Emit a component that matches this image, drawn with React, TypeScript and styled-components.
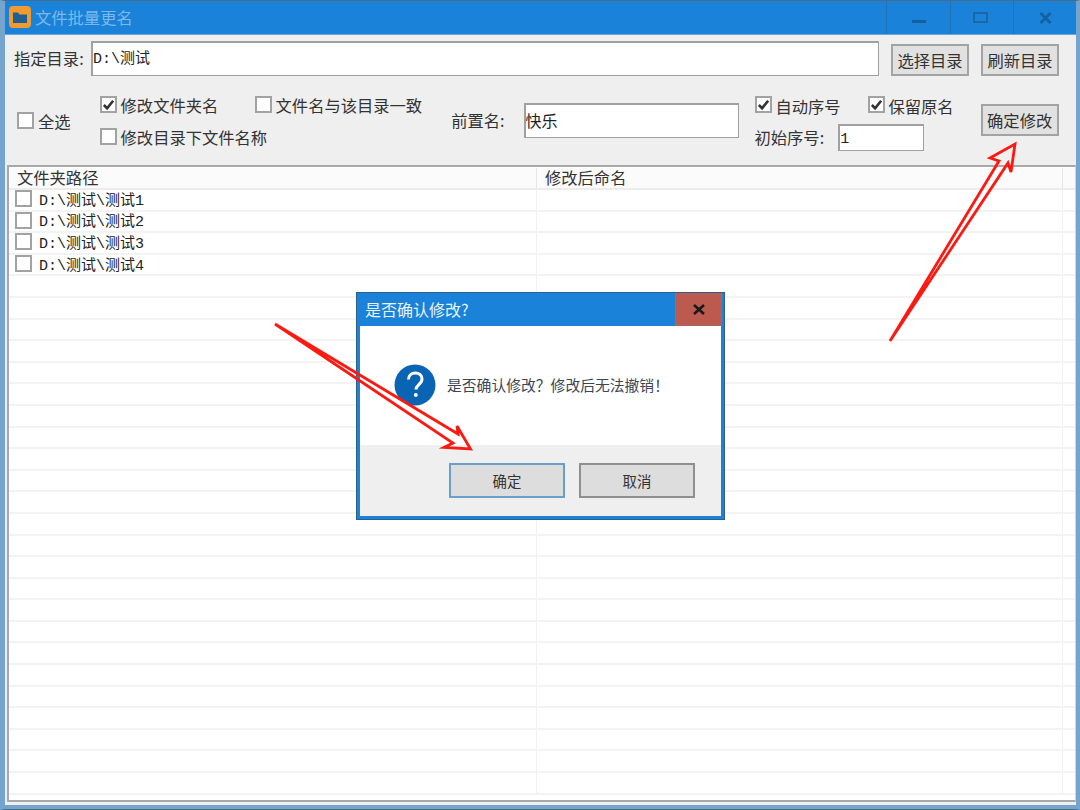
// App.tsx
import styled, { createGlobalStyle } from "styled-components";

const GlobalStyle = createGlobalStyle`
    * {
        box-sizing: border-box;
    }
    html, body {
        margin: 0;
        padding: 0;
        background: #efefef;
    }
    body {
        font-family: "Noto Sans CJK SC", "Liberation Sans", sans-serif;
    }
`;

const Frame = styled.div`
    position: relative;
    width: 1080px;
    height: 810px;
    overflow: hidden;
    display: flex;
    flex-direction: column;
    background: #efefef;
    border-top: 1px solid #4a6a85;
    border-bottom: 1px solid #4a6a85;
    border-left: 5px solid #75a4cf;
    border-right: 4px solid #75a4cf;
    box-shadow: inset 0 -4px 0 #75a4cf;
    padding-bottom: 7px;
`;

const TitleBar = styled.div`
    display: flex;
    align-items: stretch;
    flex: none;
    height: 34px;
    margin: 0 -4px 0 -5px;
    padding-left: 9px;
    background: #1a82d8;
    border-bottom: 1px solid #6aa6da;
`;

const AppIcon = styled.svg`
    width: 22px;
    height: 22px;
    margin-top: 5px;
`;

const AppTitle = styled.div`
    flex: 1;
    margin-left: 4px;
    font-size: 16.3px;
    line-height: 33px;
    color: #7db8ea;
`;

const WinButton = styled.div<{ $w: number; $shift?: number }>`
    width: ${(p) => p.$w}px;
    display: flex;
    align-items: center;
    justify-content: center;
    border-left: 1px solid #2072b8;
    padding-right: ${(p) => p.$shift ?? 0}px;
    svg {
        display: block;
    }
`;

const DirRow = styled.div`
    display: flex;
    flex: none;
    align-items: flex-end;
    height: 41px;
    padding-left: 9px;
`;

const DirLabel = styled.span`
    align-self: center;
    margin-top: 4px;
    width: 77px;
    font-size: 16.3px;
    line-height: 22px;
    color: #333;
    white-space: nowrap;
`;

const Label = styled.span`
    font-size: 16.3px;
    line-height: 22px;
    color: #333;
    white-space: nowrap;
`;

const CheckText = styled(Label)`
    padding-top: 2px;
`;

const TextBox = styled.div<{ $w: number; $h: number }>`
    width: ${(p) => p.$w}px;
    height: ${(p) => p.$h}px;
    display: flex;
    align-items: center;
    padding-bottom: 1px;
    background: #fff;
    border: 2px solid #a0a0a0;
    border-right-width: 1px;
    border-bottom-width: 1px;
    font-size: 16px;
    color: #222;
`;

const MonoText = styled.span<{ $drop?: number }>`
    margin-top: ${(p) => p.$drop ?? 0}px;
    font-family: "Liberation Mono", "Noto Sans CJK SC", monospace;
    font-size: 15px;
    line-height: 16px;
    color: #222;
    white-space: nowrap;
`;

const Button = styled.div`
    width: 78px;
    height: 32px;
    display: flex;
    align-items: center;
    justify-content: center;
    background: #e1e1e1;
    border: 2px solid #a3a3a3;
    font-size: 16.3px;
    color: #333;
`;

const OptionsRow = styled.div`
    display: flex;
    flex: none;
    align-items: center;
    height: 89px;
    padding: 0 0 1px 12px;
`;

const CheckLine = styled.div`
    display: flex;
    align-items: center;
    gap: 4px;
    height: 22px;
`;

const Box = styled.div`
    width: 17px;
    height: 17px;
    flex: none;
    display: flex;
    align-items: center;
    justify-content: center;
    background: #fff;
    border: 2px solid #a2a2a2;
`;

const OptionGrid = styled.div`
    display: grid;
    grid-template-columns: 155px auto;
    row-gap: 10px;
    margin-left: 29px;
`;

const SpanAll = styled.div`
    grid-column: 1 / 3;
`;

const PrefixLabel = styled(Label)`
    margin-left: 29px;
    margin-right: 19px;
`;

const SequenceGrid = styled.div`
    display: grid;
    grid-template-columns: 113px auto;
    row-gap: 8px;
    margin: 4px 0 0 16px;
    align-items: center;
`;

const SeqInput = styled.div`
    grid-column: 1 / 3;
    display: flex;
    align-items: center;
    gap: 14px;
`;

const List = styled.div`
    flex: 1;
    min-height: 0;
    overflow: hidden;
    margin: 0 0 0 2px;
    background: #fff;
    border-top: 2px solid #a8a8a8;
    border-left: 2px solid #a8a8a8;
    border-bottom: 2px solid #a8a8a8;
    border-right: 1px solid #d4d4d4;
    padding-top: 1px;
`;

const HeadRow = styled.div`
    display: grid;
    grid-template-columns: 528px 526px 1fr;
    height: 22px;
    background: #fbfbfb;
    border-bottom: 2px solid #ececec;
`;

const HeadCell = styled.div`
    padding-left: 8px;
    font-size: 16.3px;
    line-height: 18px;
    color: #333;
    border-right: 1px solid #e6e6e6;
`;

const Row = styled.div`
    display: grid;
    grid-template-columns: 528px 526px 1fr;
    grid-template-rows: 19.6px;
    height: 21.6px;
    border-bottom: 2px solid #f3f3f3;
`;

const Cell = styled.div`
    display: flex;
    align-items: center;
    gap: 7px;
    padding: 0 0 2px 6px;
    border-right: 1px solid #f0f0f0;
`;

const Dialog = styled.div`
    position: absolute;
    left: 351px;
    top: 291px;
    width: 369px;
    height: 228px;
    display: flex;
    flex-direction: column;
    background: #1a82d8;
    border: 1px solid #2c5f8a;
    padding: 0 3px 3px 3px;
`;

const DialogHead = styled.div`
    display: flex;
    flex: none;
    justify-content: space-between;
    height: 33px;
    margin: 0 -1px 0 0;
    padding-left: 5px;
    font-size: 16px;
    line-height: 33px;
    color: #e8f3fc;
`;

const DialogClose = styled.div`
    width: 47px;
    display: flex;
    align-items: center;
    justify-content: center;
    background: #bd5a50;
    border: 1px solid #a8685f;
    border-top: none;
`;

const DialogBody = styled.div`
    height: 119px;
    flex: none;
    display: flex;
    align-items: center;
    gap: 11px;
    padding: 0 0 2px 34px;
    background: #fff;
    font-size: 14.8px;
    color: #3a4656;
`;

const DialogFoot = styled.div`
    flex: 1;
    display: flex;
    justify-content: flex-end;
    gap: 14px;
    padding: 18px 26px 0 0;
    background: #efefef;
`;

const DialogButton = styled.div<{ $primary?: boolean }>`
    width: 116px;
    height: 35px;
    display: flex;
    align-items: center;
    justify-content: center;
    background: #dddddd;
    border: 2px solid ${(p) => (p.$primary ? "#6a9fcb" : "#8f8f8f")};
    font-size: 14.4px;
    color: #333;
`;

const Arrows = styled.svg`
    position: absolute;
    left: -5px;
    top: -1px;
    width: 1080px;
    height: 810px;
    pointer-events: none;
`;

const paths = ["测试1", "测试2", "测试3", "测试4"];
const ROW_COUNT = 28;

// full-width punctuation, as the dialog shows it
const CONFIRM_TEXT = "是否确认修改\uFF1F修改后无法撤销\uFF01";

function Tick() {
    return (
        <svg width="13" height="13" viewBox="0 0 14 14">
            <path d="M2 7.500 L5.500 11 L12 3" fill="none" stroke="#333" strokeWidth="2.800" />
        </svg>
    );
}

function CheckItem({ text, checked }: { text: string; checked?: boolean }) {
    return (
        <CheckLine>
            <Box>{checked && <Tick />}</Box>
            <CheckText>{text}</CheckText>
        </CheckLine>
    );
}

export default function App() {
    return (
        <>
            <GlobalStyle />
            <Frame>
                <TitleBar>
                    <AppIcon viewBox="0 0 22 22">
                        <rect width="22" height="22" rx="4" fill="#f09a30" />
                        <path d="M4 6.500h5l1.500 2H18v8.500H4z" fill="#1f5f96" />
                    </AppIcon>
                    <AppTitle>文件批量更名</AppTitle>
                    <WinButton $w={64}>
                        <svg width="14" height="14" viewBox="0 0 14 14">
                            <rect x="0" y="9" width="14" height="3" fill="#155f9e" />
                        </svg>
                    </WinButton>
                    <WinButton $w={63} $shift={3}>
                        <svg width="15" height="11" viewBox="0 0 15 11">
                            <rect x="1" y="1" width="13" height="9" fill="none" stroke="#1b67a8" strokeWidth="2" />
                        </svg>
                    </WinButton>
                    <WinButton $w={67} $shift={4}>
                        <svg width="13" height="12" viewBox="0 0 13 12">
                            <path d="M1.500 1 L11.500 11 M11.500 1 L1.500 11" stroke="#155f9e" strokeWidth="2.600" />
                        </svg>
                    </WinButton>
                </TitleBar>

                <DirRow>
                    <DirLabel>指定目录:</DirLabel>
                    <TextBox $w={788} $h={35}>
                        <MonoText $drop={2}>D:\测试</MonoText>
                    </TextBox>
                    <Button style={{ marginLeft: 12 }}>选择目录</Button>
                    <Button style={{ marginLeft: 12 }}>刷新目录</Button>
                </DirRow>

                <OptionsRow>
                    <CheckItem text="全选" />
                    <OptionGrid>
                        <CheckItem text="修改文件夹名" checked />
                        <CheckItem text="文件名与该目录一致" />
                        <SpanAll>
                            <CheckItem text="修改目录下文件名称" />
                        </SpanAll>
                    </OptionGrid>
                    <PrefixLabel>前置名:</PrefixLabel>
                    <TextBox $w={215} $h={35}>快乐</TextBox>
                    <SequenceGrid>
                        <CheckItem text="自动序号" checked />
                        <CheckItem text="保留原名" checked />
                        <SeqInput>
                            <Label>初始序号:</Label>
                            <TextBox $w={86} $h={27}>
                                <MonoText $drop={6}>1</MonoText>
                            </TextBox>
                        </SeqInput>
                    </SequenceGrid>
                    <Button style={{ marginLeft: 27 }}>确定修改</Button>
                </OptionsRow>

                <List>
                    <HeadRow>
                        <HeadCell>文件夹路径</HeadCell>
                        <HeadCell>修改后命名</HeadCell>
                        <div />
                    </HeadRow>
                    {Array.from({ length: ROW_COUNT }, (_, i) => (
                        <Row key={i}>
                            <Cell>
                                {paths[i] && (
                                    <>
                                        <Box />
                                        <MonoText $drop={6}>D:\测试\{paths[i]}</MonoText>
                                    </>
                                )}
                            </Cell>
                            <Cell />
                            <div />
                        </Row>
                    ))}
                </List>

                <Dialog>
                    <DialogHead>
                        是否确认修改?
                        <DialogClose>
                            <svg width="12" height="11" viewBox="0 0 12 11">
                                <path d="M1 1 L11 10 M11 1 L1 10" stroke="#1a1a1a" strokeWidth="2.600" />
                            </svg>
                        </DialogClose>
                    </DialogHead>
                    <DialogBody>
                        <svg width="42" height="42" viewBox="0 0 42 42">
                            <circle cx="21" cy="21" r="20.500" fill="#0a64b4" />
                            <path
                                d="M14.500 15.500c0-4 2.800-6.500 6.800-6.500s6.700 2.500 6.700 6c0 5.500-6 5.500-6 10.500"
                                fill="none"
                                stroke="#fff"
                                strokeWidth="3"
                            />
                            <circle cx="21.800" cy="31" r="2" fill="#fff" />
                        </svg>
                        {CONFIRM_TEXT}
                    </DialogBody>
                    <DialogFoot>
                        <DialogButton $primary>确定</DialogButton>
                        <DialogButton>取消</DialogButton>
                    </DialogFoot>
                </Dialog>

                <Arrows viewBox="0 0 1080 810">
                    <g fill="none" stroke="#fb1a12" strokeWidth="2.800" strokeLinejoin="miter">
                        <path d="M890 341 L999 161 L990 158 L1015 144 L1011 172 L1008 163 Z" />
                        <path d="M275 324 L458 434 L457 426 L470.500 449 L444 447.500 L453 443 Z" />
                    </g>
                </Arrows>
            </Frame>
        </>
    );
}
